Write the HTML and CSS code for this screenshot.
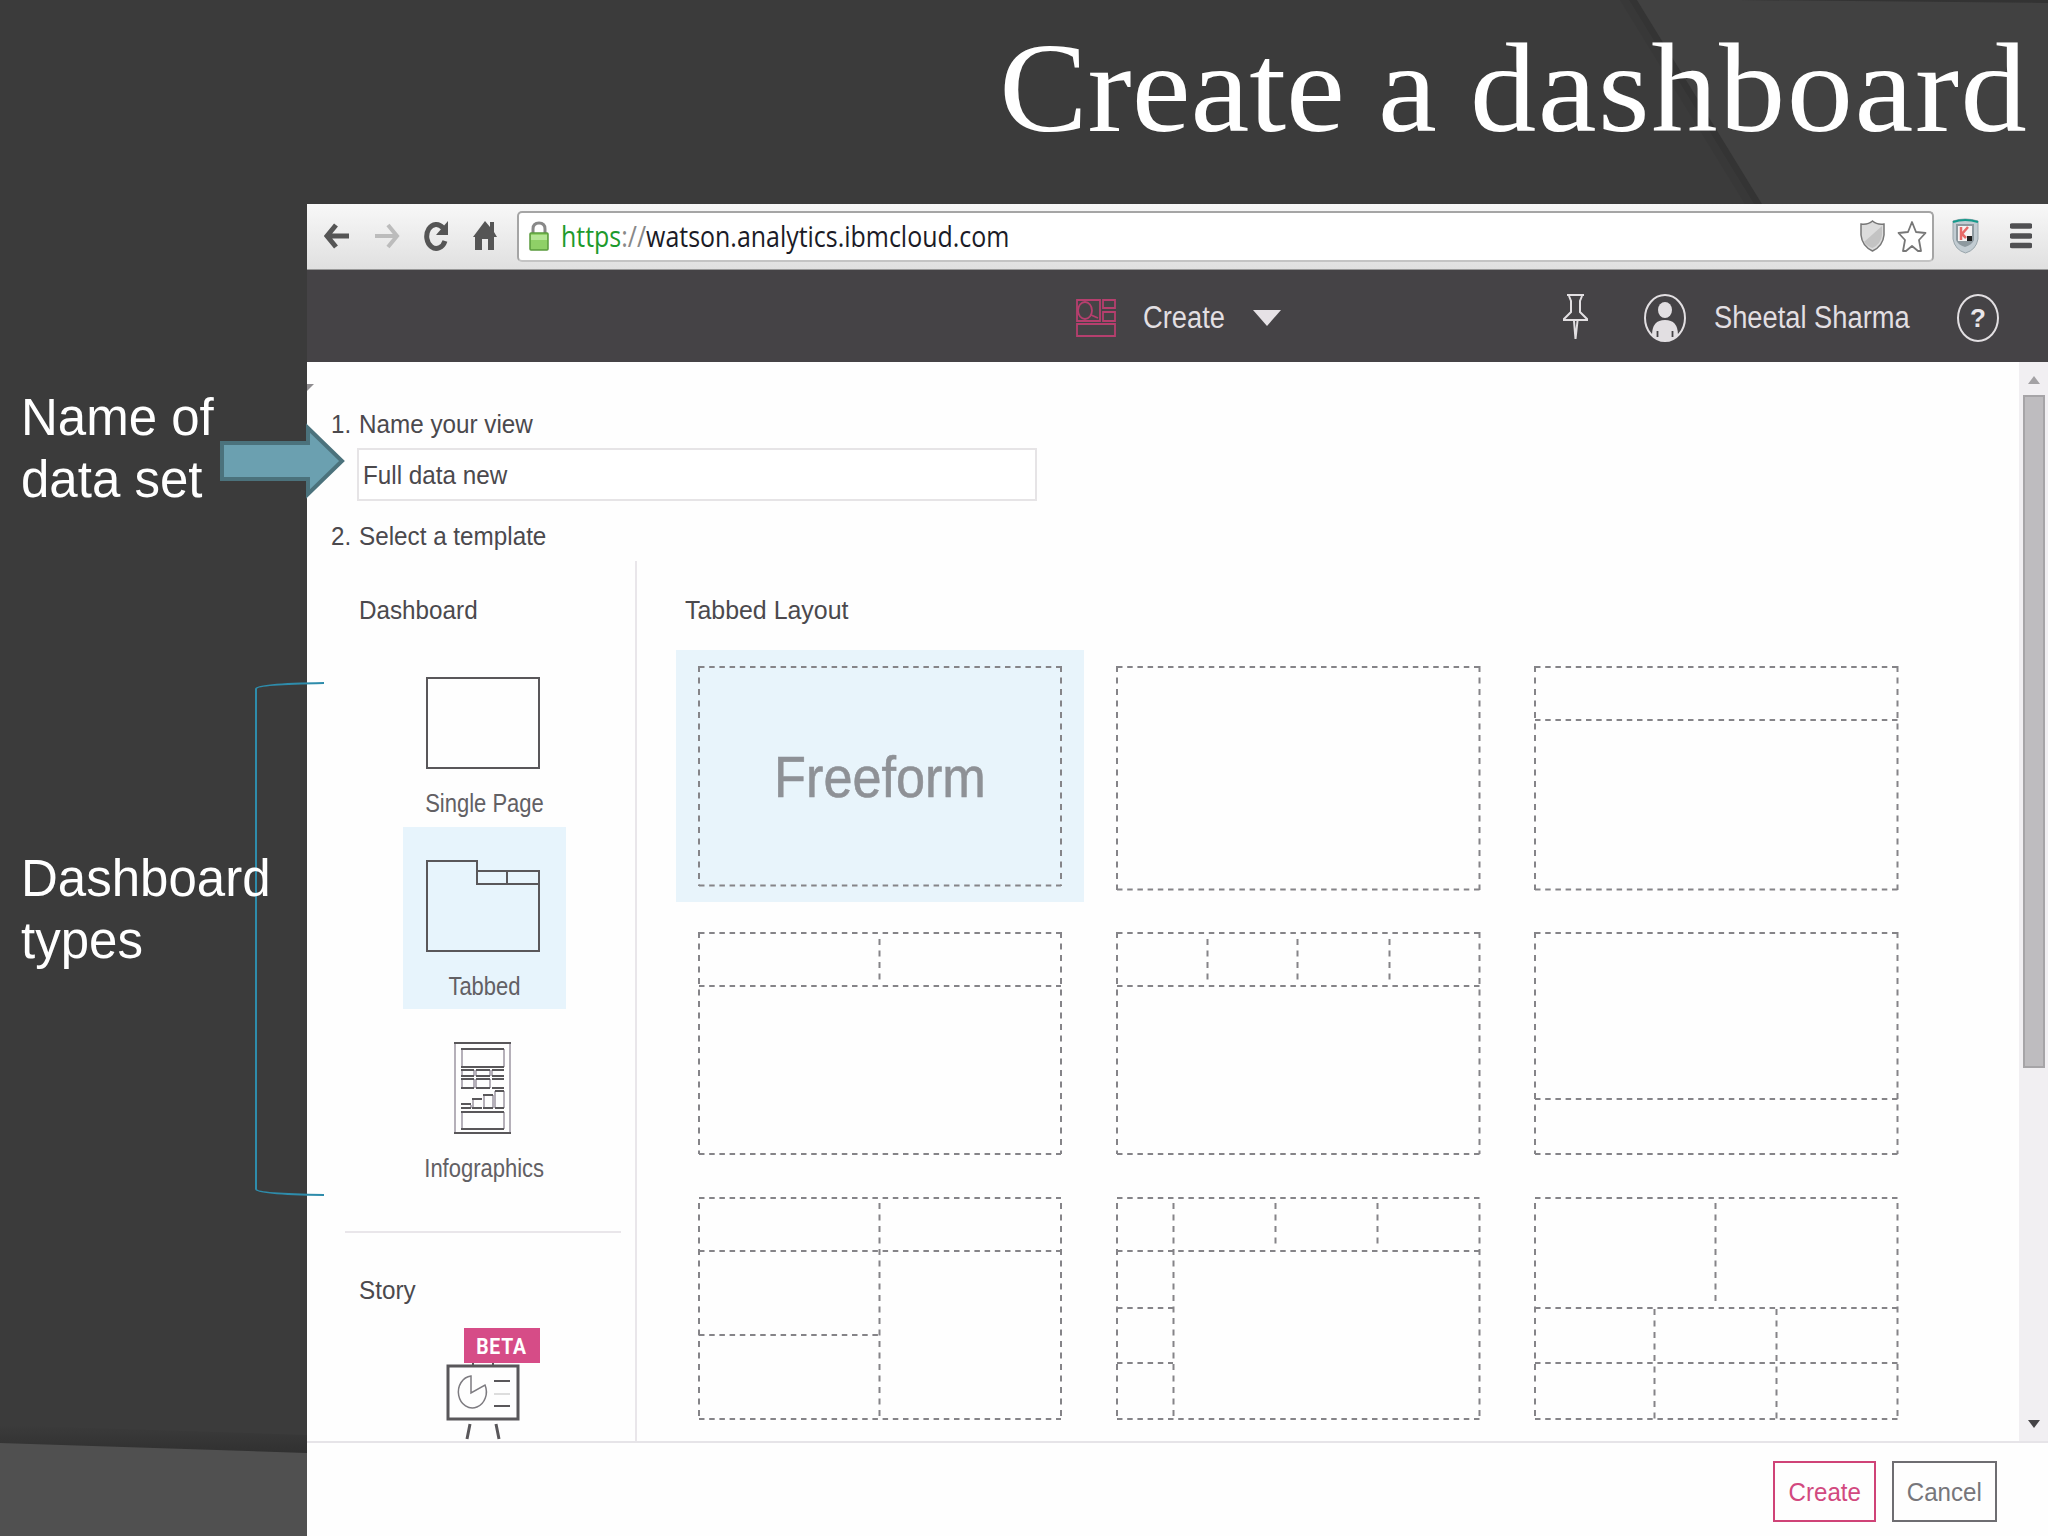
FILE: index.html
```html
<!DOCTYPE html>
<html lang="en">
<head>
    <meta charset="UTF-8">
    <meta name="viewport" content="width=device-width, initial-scale=1.0">
    <title>Create a dashboard</title>
    <link rel="stylesheet" href="styles.css">
</head>
<body>
  <div class="slide">
    <svg class="backdrop" width="2048" height="1536" viewBox="0 0 2048 1536">
      <defs>
        <linearGradient id="floor" x1="0" y1="0" x2="0" y2="1">
          <stop offset="0" stop-color="#303030" stop-opacity="0"/>
          <stop offset="1" stop-color="#303030"/>
        </linearGradient>
      </defs>
      <path d="M1629 0H1637L1762 204H1754Z" fill="#343434"/>
      <path d="M1620 0H1629L1754 204H1745Z" fill="#383838"/>
      <path d="M1637 0H2048V204H1762Z" fill="#414141"/>
      <path d="M1740 0H2048V3Z" fill="#333"/>
      <path d="M0 1425L307 1435V1454L0 1444Z" fill="url(#floor)"/>
      <path d="M0 1443L307 1453V1536H0Z" fill="#505050"/>
    </svg>

    <h1 class="title"><span>Create a <span class="wide">dashboard</span></span></h1>

    <div class="stage">
      <div class="notes">
        <p class="note">Name of<br>data set</p>
        <p class="note types">Dashboard<br>types</p>
      </div>

      <div class="browser">
        <div class="toolbar">
          <svg class="back" width="26" height="26" viewBox="0 0 26 26"><path d="M12 2L3 13L12 24M4 13H25" fill="none" stroke="#555" stroke-width="5"/></svg>
          <svg class="forward" width="26" height="26" viewBox="0 0 26 26"><path d="M14 2L23 13L14 24M22 13H1" fill="none" stroke="#bcbcbc" stroke-width="4"/></svg>
          <svg class="reload" width="27" height="30" viewBox="0 0 27 30"><path d="M21 7A9.500 12 0 1 0 23 20" fill="none" stroke="#555" stroke-width="5"/><path d="M26 0V14H14Z" fill="#555"/></svg>
          <svg class="home" width="24" height="30" viewBox="0 0 24 30"><path d="M12 0L17 6V1H21V11L24 16H21V29H15V18H9V29H2V16H0Z" fill="#555"/></svg>
          <div class="address">
            <svg class="lock" width="20" height="31" viewBox="0 0 20 31"><path d="M4 14V8Q4 2 10 2T16 8V14" fill="none" stroke="#888" stroke-width="3"/><rect x="1" y="12" width="18" height="17" rx="1" fill="#8fd067" stroke="#5a9a3c" stroke-width="1.500"/><path d="M2 14H18V19H2Z" fill="#b4e595"/></svg>
            <span class="url"><span class="secure">https</span><span class="slashes">://</span>watson.analytics.ibmcloud.com</span>
            <svg class="shield" width="25" height="32" viewBox="0 0 25 32"><path d="M12.500 1Q17 5 24 4V15Q23 26 12.500 31Q2 26 1 15V4Q8 5 12.500 1Z" fill="#dcdcdc" stroke="#777" stroke-width="1.500"/><path d="M4 22L22 6V15Q21 24 12.500 28Q8 27 4 22Z" fill="#c3c3c3"/></svg>
            <svg class="star" width="30" height="33" viewBox="0 0 30 33"><path d="M15 2L19 12L28.500 13L22 20L24 31H21L15 26L9 31H6L8 20L1.500 13L11 12Z" fill="#fff" stroke="#777" stroke-width="1.800" stroke-linejoin="round"/></svg>
          </div>
          <svg class="guard" width="27" height="36" viewBox="0 0 27 36"><path d="M1 3Q13 -1 26 3V21Q24 32 13.500 35Q3 32 1 21Z" fill="#c2ccd2" stroke="#98a5ab"/><path d="M1 4Q13 0 26 4" fill="none" stroke="#169a8c" stroke-width="2"/><path d="M4 6H22V22Q20 27 13 29Q6 27 4 22Z" fill="#8d999f"/><path d="M6 8H20V23H6Z" fill="#f5f3f3"/><path d="M9 9V22M16 9L10 16L14 20" fill="none" stroke="#e66a68" stroke-width="2.500"/><path d="M15 18H20V23H15Z" fill="#222"/></svg>
          <svg class="menu" width="22" height="26" viewBox="0 0 22 26"><path d="M2 3H20M2 13H20M2 22.500H20" stroke="#505052" stroke-width="5.500" stroke-linecap="round"/></svg>
        </div>

        <div class="appbar">
          <svg class="views" width="40" height="39" viewBox="0 0 40 39"><g fill="none" stroke="#b63f6e" stroke-width="1.800"><path d="M1 1H24V22H1ZM27 1H39V9H27ZM27 13H39V22H27ZM1 25H39V37H1Z"/><ellipse cx="9" cy="11.500" rx="7" ry="8.500"/><path d="M15 16L22 19"/></g></svg>
          <span class="bar-text create">Create</span>
          <svg class="caret" width="28" height="17" viewBox="0 0 28 17"><path d="M0 0H28L14 16Z" fill="#e6e2e6"/></svg>
          <svg class="pin" width="28" height="48" viewBox="0 0 28 48"><path d="M5 1H22M7 2L9 7V18L2 25V26H25V25L18 18V7L20 2M12 27L13.500 45L15.500 27" fill="none" stroke="#e2dfe2" stroke-width="2"/></svg>
          <svg class="person" width="42" height="48" viewBox="0 0 42 48"><ellipse cx="21" cy="24" rx="20" ry="23" fill="none" stroke="#e2dfe2" stroke-width="2"/><ellipse cx="21" cy="16" rx="7" ry="8" fill="#e2dfe2"/><path d="M8 41Q8 26 21 26T34 41Q29 47 21 47T8 41Z" fill="#e2dfe2"/><path d="M13.500 37V43M28.500 37V43" stroke="#454346" stroke-width="1.800"/></svg>
          <span class="bar-text user">Sheetal Sharma</span>
          <span class="help">?</span>
        </div>

        <div class="viewport">
          <div class="page">
            <svg class="notch" width="7" height="8" viewBox="0 0 7 8"><path d="M0 0H7L0 7Z" fill="#8f8d90"/></svg>
            <div class="step"><span class="num">1.</span><span class="txt">Name your view</span></div>
            <div class="name-input"><span class="txt">Full data new</span></div>
            <div class="step"><span class="num">2.</span><span class="txt">Select a template</span></div>

            <div class="columns">
              <div class="sidebar">
                <h3><span class="txt">Dashboard</span></h3>
                <div class="type">
                  <svg width="114" height="92" viewBox="0 0 114 92"><rect x="1" y="1" width="112" height="90"/></svg>
                  <span class="label">Single Page</span>
                </div>
                <div class="type selected">
                  <svg width="114" height="92" viewBox="0 0 114 92"><path d="M1 1H51V24H113V91H1ZM51 11H113V24M81 11V24"/></svg>
                  <span class="label">Tabbed</span>
                </div>
                <div class="type">
                  <svg width="58" height="92" viewBox="0 0 58 92"><rect class="thin" x="1" y="1" width="55" height="90"/><path d="M0 1H57M0 91H57"/><path class="thin" d="M8 7V25M50 7V25M8 28V34M20 28V34M22 28V34M36 28V34M38 28V34M8 37V46M20 37V46M22 37V46M36 37V46M8 70V87M50 70V87M17 63V66M19 57V66M30 53V66M39 53V66M41 49V66M50 49V66"/><path d="M7 7H50M7 25H50M7 28H20M22 28H36M38 28H50M7 34H20M22 34H36M38 34H50M7 37H20M22 37H36M38 37H50M7 46H20M22 46H36M38 46H50M7 62H17M18 57H28M29 53H39M41 49H50M7 66H17M18 66H28M29 66H39M41 66H50M7 70H50M7 87H50"/></svg>
                  <span class="label">Infographics</span>
                </div>
                <hr>
                <h3 class="story"><span class="txt">Story</span></h3>
                <div class="beta"><span>BETA</span></div>
                <svg class="board" width="74" height="78" viewBox="0 0 74 78"><path d="M27 0V3M47 0V3"/><rect x="2" y="3" width="70" height="53" stroke-width="3"/><path class="pie" d="M25 13A14 16 0 1 0 39 22L25 30Z"/><path d="M48 18H64M48 43H64"/><path class="faint" d="M48 31H64"/><path d="M24 61L21 76M50 61L53 76" stroke-width="3"/></svg>
              </div>

              <div class="layouts">
                <h3><span class="txt">Tabbed Layout</span></h3>
                <div class="grid">
                  <div class="template selected">
                    <svg viewBox="0 0 365 225"><path class="h" d="M1 1H363M1 219.500H363"/><path class="v" d="M1 0V220M363 0V220"/></svg>
                    <span class="freeform">Freeform</span>
                  </div>
                  <div class="template"><svg viewBox="0 0 365 225"><path class="h" d="M1 1H364M1 223.500H364"/><path class="v" d="M1 0V224M363.500 0V224"/></svg></div>
                  <div class="template"><svg viewBox="0 0 365 225"><path class="h" d="M1 1H364M1 54H364M1 223.500H364"/><path class="v" d="M1 0V224M363.500 0V224"/></svg></div>

                  <div class="template"><svg viewBox="0 0 365 225"><path class="h" d="M1 1H363M1 54H363M1 222H363"/><path class="v" d="M1 0V222M363 0V222M181.500 7V50"/></svg></div>
                  <div class="template"><svg viewBox="0 0 365 225"><path class="h" d="M1 1H364M1 54H364M1 222H364"/><path class="v" d="M1 0V222M363.500 0V222M91.500 7V50M181.500 7V50M273.500 7V50"/></svg></div>
                  <div class="template"><svg viewBox="0 0 365 225"><path class="h" d="M1 1H364M1 167H364M1 222H364"/><path class="v" d="M1 0V222M363.500 0V222"/></svg></div>

                  <div class="template"><svg viewBox="0 0 365 225"><path class="h" d="M1 1H363M1 54H363M1 138H181M1 222H363"/><path class="v" d="M1 6V222M363 6V222M181.500 6V222"/></svg></div>
                  <div class="template"><svg viewBox="0 0 365 225"><path class="h" d="M1 1H364M1 54H364M1 111H57M1 166H57M1 222H364"/><path class="v" d="M1 6V222M363.500 6V222M57.500 6V222M159.500 6V50M261.500 6V50"/></svg></div>
                  <div class="template"><svg viewBox="0 0 365 225"><path class="h" d="M1 1H364M1 111H364M1 166H364M1 222H364"/><path class="v" d="M1 6V222M363.500 6V222M181.500 6V106M120.500 112V222M242.500 112V222"/></svg></div>
                </div>
              </div>
            </div>
          </div>

          <div class="scrollbar">
            <svg width="12" height="8" viewBox="0 0 12 8"><path d="M0 8L6 0L12 8Z" fill="#a3a1a4"/></svg>
            <div class="thumb"></div>
            <svg width="12" height="8" viewBox="0 0 12 8"><path d="M0 0H12L6 8Z" fill="#454346"/></svg>
          </div>
        </div>

        <div class="footer">
          <div class="btn primary"><span>Create</span></div>
          <div class="btn cancel"><span>Cancel</span></div>
        </div>
      </div>
    </div>

    <svg class="arrow" width="126" height="80" viewBox="0 0 126 80"><path d="M2 22H88V7L122 40L88 73V58H2Z" fill="#6ba0b0" stroke="#4b727c" stroke-width="4"/></svg>
    <svg class="bracket" width="70" height="516" viewBox="0 0 70 516"><path d="M70 2Q2 3 2 8V508Q2 513 70 514" fill="none" stroke="#2e8cab" stroke-width="2"/></svg>
  </div>
</body>
</html>
```

FILE: styles.css
```css
* {
  box-sizing: border-box;
}
body {
  margin: 0;
  font-family: "Liberation Sans", Arial, sans-serif;
}
svg {
  display: block;
  flex: none;
}
.slide {
  position: relative;
  width: 2048px;
  height: 1536px;
  overflow: hidden;
  background-color: #3b3b3b;
}
.backdrop {
  position: absolute;
  top: 0;
  left: 0;
}
.title {
  position: relative;
  height: 204px;
  margin: 0;
  padding-right: 20px;
  text-align: right;
  color: #fff;
  font-family: "Liberation Serif", serif;
  font-size: 128px;
  font-weight: normal;
  line-height: 176px;
  white-space: nowrap;
}
.title > span {
  display: inline-block;
  transform: scaleX(1.035);
  transform-origin: right;
}
.title .wide {
  letter-spacing: 1.5px;
}
.stage {
  position: relative;
  display: flex;
  height: 1332px;
}

/* slide notes */
.notes {
  width: 307px;
  padding: 183px 0 0 21px;
}
.note {
  margin: 0;
  color: #fff;
  font-size: 51px;
  line-height: 61.5px;
  white-space: nowrap;
}
.types {
  position: relative;
  z-index: 2;
  margin-top: 338px;
}
.arrow {
  position: absolute;
  left: 220px;
  top: 421px;
}
.bracket {
  position: absolute;
  left: 254px;
  top: 681px;
}

/* browser */
.browser {
  width: 1741px;
  background-color: #fefefe;
}
.toolbar {
  display: flex;
  align-items: center;
  height: 66px;
  padding: 0 0 1px 17px;
  background: linear-gradient(#f8f8f8, #e0e0e0);
  border-bottom: 1px solid #999;
}
.forward {
  margin-left: 24px;
}
.reload {
  margin-left: 22px;
}
.home {
  margin-left: 24px;
}
.address {
  display: flex;
  align-items: center;
  width: 1417px;
  height: 51px;
  margin-left: 20px;
  padding-left: 10px;
  background-color: #fff;
  border: 2px solid #a5a5a5;
  border-bottom-color: #c4c4c4;
  border-radius: 5px;
}
.url {
  width: 1299px;
  margin-left: 12px;
  color: #1b1b26;
  font-family: "Open Sans", sans-serif;
  font-size: 29px;
  line-height: 40px;
  white-space: nowrap;
  transform: scaleX(.86);
  transform-origin: left;
}
.secure {
  color: #1d9a2c;
}
.slashes {
  color: #888;
}
.star {
  margin-left: 12px;
}
.guard {
  margin-left: 18px;
}
.menu {
  margin-left: 31px;
}
.appbar {
  display: flex;
  align-items: center;
  height: 92px;
  padding: 4px 0 0 769px;
  background-color: #454346;
}
.bar-text {
  flex: none;
  color: #e2dfe2;
  font-size: 31px;
  line-height: 40px;
  white-space: nowrap;
  transform: scaleX(.88);
  transform-origin: left;
}
.create {
  width: 82px;
  margin-left: 27px;
}
.caret {
  margin-left: 28px;
}
.pin {
  margin-left: 281px;
}
.person {
  margin-left: 54px;
}
.user {
  width: 194px;
  margin-left: 28px;
}
.help {
  width: 42px;
  height: 48px;
  margin-left: 49px;
  border: 2px solid #e2dfe2;
  border-radius: 50%;
  color: #e9e6e9;
  font-size: 26px;
  font-weight: bold;
  line-height: 44px;
  text-align: center;
}

/* page */
.viewport {
  display: flex;
  height: 1079px;
}
.page {
  position: relative;
  width: 1712px;
  height: 1079px;
  padding-top: 47px;
  overflow: hidden;
  color: #4b494d;
  font-size: 26.5px;
  line-height: 30px;
}
.notch {
  position: absolute;
  left: 0;
  top: 22px;
}
.step {
  display: flex;
  padding-left: 24px;
}
.num {
  width: 28px;
  transform: scaleX(.91);
  transform-origin: left;
}
.txt {
  display: inline-block;
  white-space: nowrap;
  transform: scaleX(.915);
  transform-origin: left;
}
.name-input {
  width: 680px;
  height: 53px;
  margin: 9px 0 20px 50px;
  padding: 10px 4px;
  background-color: #fff;
  border: 2px solid #e6e4e6;
}
.columns {
  display: flex;
  height: 880px;
  margin-top: 10px;
}
h3 {
  height: 30px;
  margin: 0;
  font-size: 26.5px;
  font-weight: normal;
}
.sidebar {
  width: 330px;
  padding-top: 34px;
  border-right: 2px solid #e9e6ea;
}
.sidebar h3 {
  margin-left: 52px;
}
.type {
  display: flex;
  flex-direction: column;
  align-items: center;
  width: 163px;
  height: 182.5px;
  margin-left: 96px;
  padding: 33px 3px 0 0;
}
.sidebar h3 + .type {
  margin-top: 19px;
}
.type svg, .board {
  fill: none;
  stroke: #59575a;
  stroke-width: 2;
}
.type .thin {
  stroke: #9d96a3;
  stroke-width: 1.5;
}
.type.selected {
  background-color: #e7f4fc;
}
.label {
  margin-top: 19px;
  color: #626064;
  white-space: nowrap;
  transform: translateX(1px) scaleX(.83);
}
hr {
  height: 2px;
  margin: 39px 14px 0 38px;
  background-color: #e9e6ea;
  border: none;
}
.sidebar .story {
  margin-top: 42px;
}
.beta {
  width: 76px;
  height: 35px;
  margin: 23px 0 0 157px;
  background-color: #d64c87;
  color: #fff;
  font-family: Roboto, sans-serif;
  font-size: 22.5px;
  font-weight: bold;
  line-height: 37px;
  text-align: center;
}
.beta span {
  display: inline-block;
  letter-spacing: 1px;
  transform: scaleX(.86);
}
.board {
  margin-left: 139px;
}
.board .pie {
  stroke: #7d7b80;
  stroke-width: 1.5;
}
.board .faint {
  stroke: #ddd;
}
.layouts {
  padding: 34px 0 0 39px;
}
.layouts h3 {
  margin-left: 9px;
}
.layouts h3 .txt {
  transform: scaleX(.94);
}
.grid {
  display: grid;
  grid-template-columns: repeat(3, 408px);
  grid-auto-rows: 252px;
  gap: 13.5px 10px;
  margin-top: 25px;
}
.template {
  position: relative;
  padding: 16px 21px 0 22px;
}
.template.selected {
  background-color: #e8f4fb;
}
.template svg {
  width: 365px;
  height: 225px;
  fill: none;
  stroke: #858488;
  stroke-width: 2;
}
.template .h {
  stroke-dasharray: 5.5 4.7;
}
.template .v {
  stroke-dasharray: 6 5.5;
}
.freeform {
  position: absolute;
  inset: 0;
  color: #8e9196;
  font-size: 58px;
  line-height: 253px;
  text-align: center;
  -webkit-text-stroke: .6px #8e9196;
  transform: scaleX(.9);
}
.scrollbar {
  display: flex;
  flex-direction: column;
  align-items: center;
  justify-content: space-between;
  width: 29px;
  padding: 14px 0 13px;
  background-color: #f1eff2;
}
.thumb {
  width: 22px;
  height: 673px;
  margin: 11px 0 auto;
  background-color: #bebcbf;
  border: 2px solid #a6a4a7;
}
.footer {
  display: flex;
  justify-content: flex-end;
  gap: 16px;
  height: 95px;
  padding: 18px 51px 0 0;
  border-top: 2px solid #e6e4e8;
}
.btn {
  width: 105px;
  height: 61px;
  border: 2px solid #6e6d71;
  color: #77767b;
  font-size: 26.5px;
  line-height: 59px;
  text-align: center;
}
.btn span {
  display: inline-block;
  transform: scaleX(.91);
}
.btn.primary {
  width: 103px;
  border-color: #cf4377;
  color: #d2497f;
}
```
